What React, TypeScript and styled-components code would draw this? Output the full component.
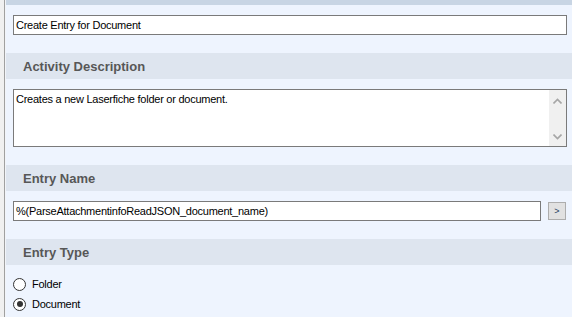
import React from 'react';
import styled, { createGlobalStyle } from 'styled-components';


const GlobalStyle = createGlobalStyle`
  html, body {
    margin: 0;
    padding: 0;
    background: #eef4fe;
  }

  body {
    font-family: "Liberation Sans", Arial, sans-serif;
  }
`


function App() {
  const entryTypes = ['Folder', 'Document']
  const selectedType = 'Document'

  return (
    <Frame>
      <GlobalStyle />
      <Gutter />

      <Panel>
        <TopBand />

        <Body>
          <TextInput>Create Entry for Document</TextInput>
        </Body>

        <Header>Activity Description</Header>
        <Body>
          <TextArea>
            <AreaText>Creates a new Laserfiche folder or document.</AreaText>
            <ScrollBar>
              <Chevron viewBox="0 0 9 6">
                <path d="M0.5 5.5 L4.5 1.5 L8.5 5.5" />
              </Chevron>
              <Chevron viewBox="0 0 9 6">
                <path d="M0.5 0.5 L4.5 4.5 L8.5 0.5" />
              </Chevron>
            </ScrollBar>
          </TextArea>
        </Body>

        <Header>Entry Name</Header>
        <Body>
          <InputRow>
            <TextInput $grow>%(ParseAttachmentinfoReadJSON_document_name)</TextInput>
            <SmallButton>&gt;</SmallButton>
          </InputRow>
        </Body>

        <Header>Entry Type</Header>
        <RadioList>
          {entryTypes.map(type => (
            <RadioRow key={type}>
              <RadioCircle $checked={type === selectedType} />
              <RadioLabel>{type}</RadioLabel>
            </RadioRow>
          ))}
        </RadioList>
      </Panel>
    </Frame>
  )
}


const Frame = styled.div`
  display: flex;
  flex-direction: row;
  width: 572px;
  height: 317px;
  overflow: hidden;
  background: #eef4fe;
`


const Gutter = styled.div`
  flex: none;
  width: 4px;
  background: #f0f0f0;
  border-right: 1px solid #a0a0a0;
`


const Panel = styled.div`
  flex: 1;
  display: flex;
  flex-direction: column;
  border-left: 1px solid #f2f4f8;
`


const TopBand = styled.div`
  height: 5px;
  background: #c8d5e4;
`


const Body = styled.div`
  padding: 10px 5px 18px 7px;
`


const Header = styled.div`
  display: flex;
  align-items: center;
  height: 26px;
  padding-left: 17px;
  background: #dee5ef;

  font-size: 13px;
  font-weight: 700;
  color: #575757;
`


const TextInput = styled.div<{ $grow?: boolean }>`
  box-sizing: border-box;
  display: flex;
  align-items: center;
  height: 20px;
  padding: 0 2px;
  ${p => p.$grow && 'flex: 1;'}

  background: #ffffff;
  border: 1px solid #7a7a7a;

  font-size: 11px;
  letter-spacing: -0.25px;
  color: #000000;
  white-space: nowrap;
`


const TextArea = styled.div`
  box-sizing: border-box;
  display: flex;
  height: 58px;

  background: #ffffff;
  border: 1px solid #7a7a7a;
`


const AreaText = styled.div`
  flex: 1;
  padding: 2px 2px;

  font-size: 11px;
  letter-spacing: -0.25px;
  line-height: 14px;
  color: #000000;
`


const ScrollBar = styled.div`
  flex: none;
  width: 17px;
  display: flex;
  flex-direction: column;
  justify-content: space-between;
  align-items: center;
  padding: 8px 0 6px;
  box-sizing: border-box;
  background: #f0f0f0;
`


const Chevron = styled.svg`
  width: 9px;
  height: 6px;
  fill: none;
  stroke: #a6a6a6;
  stroke-width: 1.6;
`


const InputRow = styled.div`
  display: flex;
  align-items: center;
  gap: 7px;
`


const SmallButton = styled.div`
  box-sizing: border-box;
  flex: none;
  display: flex;
  align-items: center;
  justify-content: center;
  width: 18px;
  height: 18px;
  margin-right: 1px;

  background: #e1e1e1;
  border: 1px solid #adadad;

  font-size: 9px;
  color: #1f3f5f;
`


const RadioList = styled.div`
  display: flex;
  flex-direction: column;
  padding: 9px 0 0 7px;
`


const RadioRow = styled.div`
  display: flex;
  align-items: center;
  gap: 6px;
  height: 20px;
`


const RadioCircle = styled.span<{ $checked: boolean }>`
  box-sizing: border-box;
  position: relative;
  width: 13px;
  height: 13px;
  border-radius: 50%;
  border: 1px solid #333333;
  background: #ffffff;

  &::after {
    content: '';
    display: ${p => (p.$checked ? 'block' : 'none')};
    position: absolute;
    left: 2.5px;
    top: 2.5px;
    width: 6px;
    height: 6px;
    border-radius: 50%;
    background: #333333;
  }
`


const RadioLabel = styled.span`
  font-size: 11px;
  letter-spacing: -0.25px;
  color: #000000;
`


export default App
